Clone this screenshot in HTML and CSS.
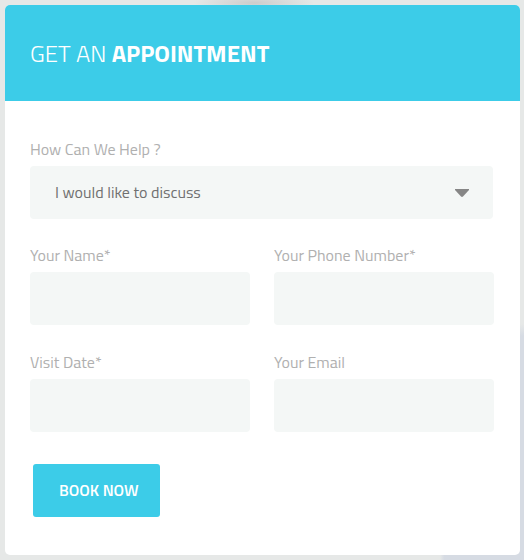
FILE: index.html
```html
<!DOCTYPE html>
<html lang="en">
<head>
  <meta charset="utf-8">
  <meta name="viewport" content="width=device-width, initial-scale=1">
  <title>Get an appointment</title>
  <link rel="stylesheet" href="styles.css">
</head>
<body>
  <main class="card">
    <header class="card-header">
      <h1 class="title">GET AN <strong>APPOINTMENT</strong></h1>
    </header>
    <form class="form">
      <div class="field">
        <label for="topic">How Can We Help ?</label>
        <div class="select-wrap">
          <select class="control select" id="topic">
            <option>I would like to discuss</option>
          </select>
          <svg class="arrow" viewBox="0 0 14 8" aria-hidden="true"><path d="M0 0h14v1L8 7.500Q7 8.300 6 7.500L0 1z"/></svg>
        </div>
      </div>
      <div class="grid">
        <div class="field">
          <label for="name">Your Name*</label>
          <input class="control" id="name" type="text">
        </div>
        <div class="field">
          <label for="phone">Your Phone Number*</label>
          <input class="control" id="phone" type="tel">
        </div>
        <div class="field">
          <label for="date">Visit Date*</label>
          <input class="control" id="date" type="text">
        </div>
        <div class="field">
          <label for="email">Your Email</label>
          <input class="control" id="email" type="email">
        </div>
      </div>
      <button class="submit" type="submit">BOOK NOW</button>
    </form>
  </main>
</body>
</html>
```

FILE: styles.css
```css
* {
  box-sizing: border-box;
}

body {
  margin: 0;
  min-height: 100vh;
  padding: 5px 4px 5px 5px;
  font-family: "Titillium Web", Roboto, sans-serif;
  font-size: 16px;
  line-height: 22px;
  background:
    radial-gradient(ellipse 60px 10px at 254px 3px, #cccccc, transparent),
    radial-gradient(ellipse 84px 236px at 100% 100%, #d6dbe3 95%, transparent),
    #e6e8e7;
}

.card {
  border-radius: 5px;
  background: #ffffff;
  overflow: hidden;
}

.card-header {
  padding: 30px 25px;
  background: #3ccce8;
}

.title {
  margin: 0;
  color: #ffffff;
  font-size: 24px;
  font-weight: 300;
  line-height: 36px;
}

.title strong {
  font-weight: 700;
}

.form {
  display: flex;
  flex-direction: column;
  gap: 25px;
  padding: 37px 26px 38px 25px;
}

.field {
  display: flex;
  flex-direction: column;
  gap: 6px;
  color: #b0b0b0;
}

.grid {
  display: grid;
  grid-template-columns: 1fr 1fr;
  gap: 26px 24px;
}

.control {
  width: 100%;
  height: 53px;
  padding: 0 25px 2px;
  border: 0;
  border-radius: 4px;
  background: #f4f7f6;
  color: #707070;
  font: inherit;
}

.select-wrap {
  position: relative;
  margin-right: 1px;
}

.select {
  display: block;
  appearance: none;
}

.arrow {
  position: absolute;
  top: 23px;
  right: 24px;
  width: 14px;
  height: 8px;
  fill: #868686;
  pointer-events: none;
}

.submit {
  align-self: flex-start;
  height: 53px;
  margin: 7px 0 0 3px;
  padding: 0 21px 2px 26px;
  border: 0;
  border-radius: 3px;
  background: #3ccce8;
  color: #ffffff;
  font: inherit;
  font-weight: 600;
}
```
